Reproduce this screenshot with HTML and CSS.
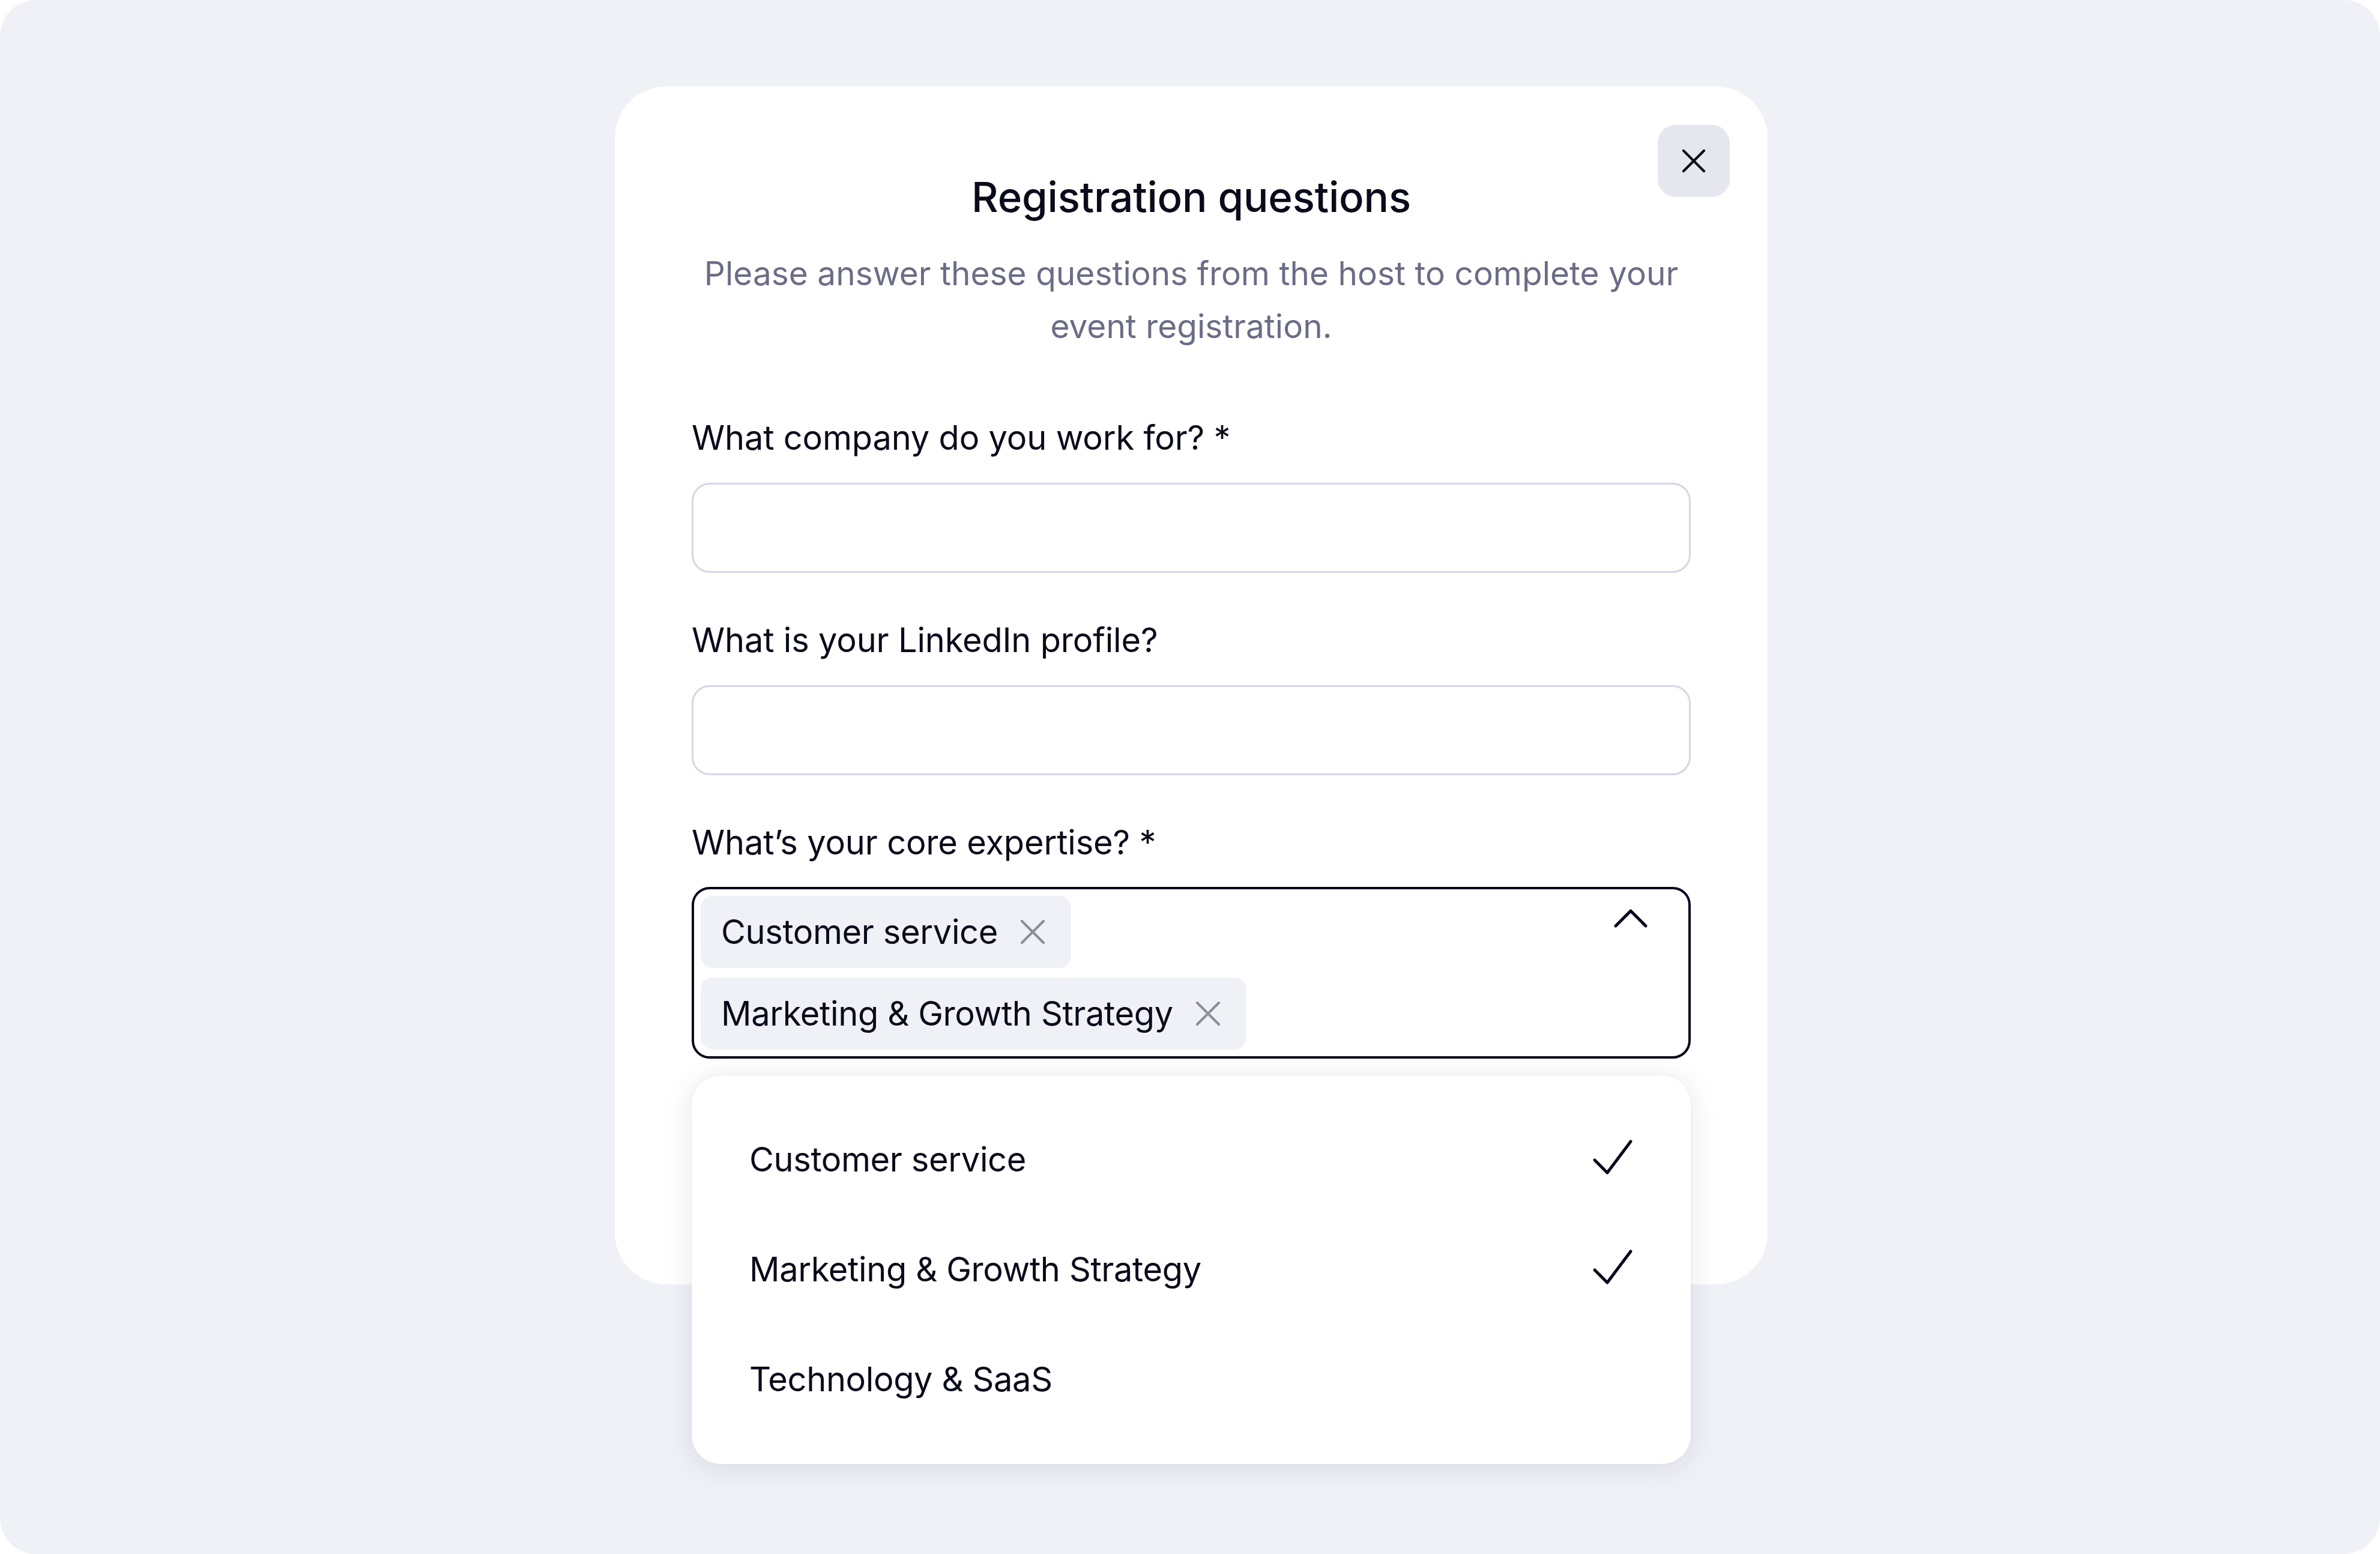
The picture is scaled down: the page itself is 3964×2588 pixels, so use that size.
FILE: index.html
```html
<!DOCTYPE html>
<html lang="en">
<head>
<meta charset="utf-8">
<title>Registration questions</title>
<link rel="stylesheet" href="styles.css">
</head>
<body>
<div class="screen">
  <div class="modal">
    <button class="close" type="button" aria-label="Close">
      <svg width="40" height="40" viewBox="0 0 40 40"><path d="M3 3 L37 37 M37 3 L3 37" fill="none" stroke="#0b0b1a" stroke-width="4.2" stroke-linecap="round"/></svg>
    </button>
    <h1 class="title">Registration questions</h1>
    <p class="subtitle">Please answer these questions from the host to complete your<br>event registration.</p>

    <div class="field">
      <label class="label">What company do you work for? *</label>
      <div class="input"></div>
    </div>

    <div class="field">
      <label class="label">What is your LinkedIn profile?</label>
      <div class="input"></div>
    </div>

    <div class="field field-last">
      <label class="label">What’s your core expertise? *</label>
      <div class="select">
        <div class="chips">
          <span class="chip">Customer service
            <svg class="chip-x" width="40" height="40" viewBox="0 0 40 40"><path d="M2 2 L38 38 M38 2 L2 38" fill="none" stroke="#8d8e99" stroke-width="4.2" stroke-linecap="round"/></svg>
          </span>
          <span class="chip">Marketing &amp; Growth Strategy
            <svg class="chip-x" width="40" height="40" viewBox="0 0 40 40"><path d="M2 2 L38 38 M38 2 L2 38" fill="none" stroke="#8d8e99" stroke-width="4.2" stroke-linecap="round"/></svg>
          </span>
        </div>
        <svg class="chevron" width="58" height="34" viewBox="0 0 58 34"><path d="M4 30 L29 5 L54 30" fill="none" stroke="#05051a" stroke-width="5" stroke-linecap="round" stroke-linejoin="round"/></svg>
      </div>
      <div class="menu">
        <div class="option"><span>Customer service</span>
          <svg width="72" height="62" viewBox="0 0 72 62"><path d="M8 36 L29 57 L68 5" fill="none" stroke="#05051a" stroke-width="5" stroke-linecap="round" stroke-linejoin="round"/></svg>
        </div>
        <div class="option"><span>Marketing &amp; Growth Strategy</span>
          <svg width="72" height="62" viewBox="0 0 72 62"><path d="M8 36 L29 57 L68 5" fill="none" stroke="#05051a" stroke-width="5" stroke-linecap="round" stroke-linejoin="round"/></svg>
        </div>
        <div class="option"><span>Technology &amp; SaaS</span></div>
      </div>
    </div>
  </div>
</div>
</body>
</html>
```
FILE: styles.css
```css
* { box-sizing: border-box; }

html, body {
  margin: 0;
  padding: 0;
  background: #ffffff;
}

body {
  font-family: Inter, "Noto Sans", "Liberation Sans", sans-serif;
  color: #0a0b1a;
}

.screen {
  height: 2588px;
  background: #f0f1f6;
  border-radius: 60px;
  padding-top: 144px;
  overflow: hidden;
}

.modal {
  position: relative;
  width: 1920px;
  margin-left: calc(50% - 958px);
  background: #ffffff;
  border-radius: 86px;
  padding: 142px 128px 376px;
}

.close {
  position: absolute;
  top: 64px;
  right: 63px;
  width: 120px;
  height: 120px;
  border: none;
  border-radius: 30px;
  background: #e6e6ee;
  display: flex;
  align-items: center;
  justify-content: center;
  padding: 0;
}

.title {
  margin: 0;
  font-size: 69px;
  line-height: 84px;
  font-weight: 500;
  text-align: center;
  letter-spacing: -0.2px;
}

.subtitle {
  margin: 41px 0 0;
  font-size: 55px;
  line-height: 88px;
  font-weight: 400;
  color: #6b6c86;
  text-align: center;
}

.field {
  position: relative;
  margin-top: 78px;
}

.field:first-of-type {
  margin-top: 108px;
}

.label {
  display: block;
  font-size: 56px;
  line-height: 68px;
  font-weight: 400;
  letter-spacing: -0.2px;
  margin-bottom: 41px;
}

.input {
  height: 150px;
  border: 3px solid #d5d6e4;
  border-radius: 30px;
  background: #ffffff;
}

.field-last .label {
  margin-bottom: 40px;
}

.select {
  display: flex;
  justify-content: space-between;
  align-items: flex-start;
  border: 4px solid #05051a;
  border-radius: 30px;
  padding: 11px 11px 11px 11px;
}

.chips {
  display: flex;
  flex-direction: column;
  align-items: flex-start;
  gap: 16px;
}

.chip {
  display: inline-flex;
  align-items: center;
  gap: 38px;
  height: 120px;
  padding: 0 44px 0 34px;
  background: #f0f1f6;
  border-radius: 20px;
  font-size: 56px;
  font-weight: 400;
  letter-spacing: -0.4px;
  white-space: nowrap;
}

.chip-x { flex: none; }

.chevron {
  flex: none;
  margin-top: 20px;
  margin-right: 56px;
}

.menu {
  position: absolute;
  left: 0;
  right: 0;
  top: calc(100% + 28px);
  background: #ffffff;
  border-radius: 48px;
  padding: 48px 0 50px;
  box-shadow: 0 6px 50px rgba(30, 30, 80, 0.10), 0 0 6px rgba(30, 30, 80, 0.04);
  z-index: 2;
}

.option {
  display: flex;
  align-items: center;
  justify-content: space-between;
  height: 183px;
  padding: 0 96px 0 96px;
  font-size: 56px;
  font-weight: 400;
  letter-spacing: -0.4px;
}

.option svg {
  flex: none;
  margin-top: -8px;
}
```
